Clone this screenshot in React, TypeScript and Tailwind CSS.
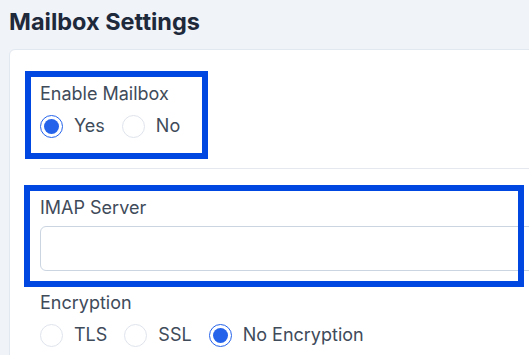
import React from 'react';

type Opt = { label: string; checked?: boolean };

const Radio = ({ label, checked }: Opt) => (
  <label className="flex items-center gap-[11px]">
    {checked ? (
      <span className="w-[23px] h-[23px] rounded-full border-[1.5px] border-[#2563eb] bg-white flex items-center justify-center">
        <span className="w-[15px] h-[15px] rounded-full bg-[#2563eb]" />
      </span>
    ) : (
      <span className="w-[23px] h-[23px] rounded-full border border-[#dfe4ec] bg-white" />
    )}
    <span className="text-[18px] leading-6 text-[#404b5a]">{label}</span>
  </label>
);

const RadioGroup = ({ options }: { options: Opt[] }) => (
  <div className="flex items-center gap-[17px] mt-2">
    {options.map((o) => (
      <Radio key={o.label} {...o} />
    ))}
  </div>
);

export default function App() {
  return (
    <div
      className="relative w-[529px] h-[355px] overflow-hidden bg-[#f0f3f8]"
      style={{ fontFamily: 'Inter, "Noto Sans", sans-serif' }}
    >
      <h1 className="pl-[9px] pt-[6px] text-[23.5px] leading-8 font-bold text-[#1e293b]">
        Mailbox Settings
      </h1>

      <div className="mt-[11px] ml-[9px] w-[600px] h-[400px] bg-white border border-[#e2e8f0] rounded-md pl-[30px] pt-[32px]">
        <div>
          <div className="text-[18px] leading-6 text-[#404b5a]">Enable Mailbox</div>
          <RadioGroup options={[{ label: 'Yes', checked: true }, { label: 'No' }]} />
        </div>

        <div className="mt-[30px] h-px bg-[#e5e8ee]" />

        <div className="mt-[27px]">
          <div className="text-[18px] leading-6 text-[#404b5a]">IMAP Server</div>
          <input
            type="text"
            className="mt-[6px] block w-full h-[45px] rounded-md border border-[#cbd5e1] bg-white outline-none"
          />
        </div>

        <div className="mt-[20px]">
          <div className="text-[18px] leading-6 text-[#404b5a]">Encryption</div>
          <RadioGroup
            options={[{ label: 'TLS' }, { label: 'SSL' }, { label: 'No Encryption', checked: true }]}
          />
        </div>
      </div>

      {/* highlight boxes drawn over the form */}
      <div className="absolute left-[25px] top-[71px] w-[183px] h-[88px] border-[6px] border-[#0047e1]" />
      <div className="absolute left-[24px] top-[185px] w-[500px] h-[102px] border-[6px] border-[#0047e1]" />
    </div>
  );
}
